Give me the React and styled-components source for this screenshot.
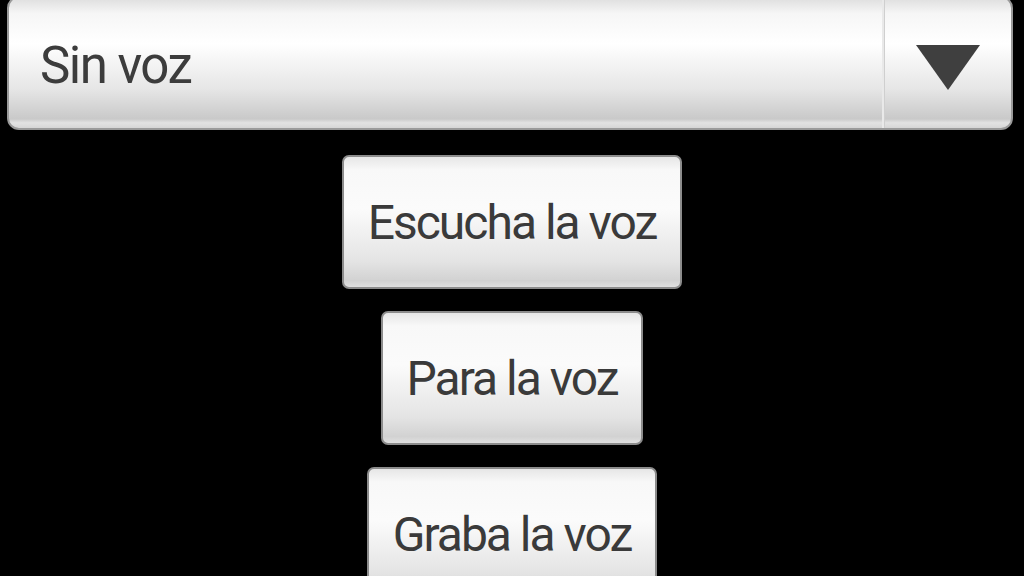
import React from "react";
import styled, { createGlobalStyle } from "styled-components";

const GlobalStyle = createGlobalStyle`
  html, body {
    margin: 0;
    padding: 0;
    background: #000;
    overflow: hidden;
  }
  body {
    font-family: Roboto, "Open Sans", "Liberation Sans", sans-serif;
  }
`;

const Screen = styled.div`
  width: 1024px;
  height: 576px;
  background: #000;
  display: flex;
  flex-direction: column;
  align-items: center;
  gap: 22px;
  overflow: hidden;
`;

const Spinner = styled.div`
  box-sizing: border-box;
  align-self: stretch;
  flex-shrink: 0;
  margin: -4px 11px 3px 7px;
  height: 134px;
  display: flex;
  border: 2px solid #9a9a9a;
  border-radius: 12px;
  background: linear-gradient(
    #dedede 0%,
    #f6f6f6 12%,
    #ffffff 35%,
    #e6e6e6 70%,
    #c9c9c9 93%,
    #e2e2e2 96%,
    #d6d6d6 100%
  );
  overflow: hidden;
`;

const SpinnerLabel = styled.div`
  flex: 1;
  display: flex;
  align-items: center;
  padding-left: 31px;
  padding-top: 4px;
  font-size: 51px;
  letter-spacing: -1.5px;
  color: #3c3c3c;
`;

const ArrowCell = styled.div`
  width: 127px;
  display: flex;
  align-items: center;
  justify-content: center;
  border-left: 2px solid #e9e9e9;
  box-shadow: inset 1px 0 0 #cfcfcf;
  padding-top: 8px;
`;

const Arrow = styled.div`
  width: 0;
  height: 0;
  border-left: 32px solid transparent;
  border-right: 32px solid transparent;
  border-top: 45px solid #3f3f3f;
`;

const Button = styled.button`
  box-sizing: border-box;
  height: 134px;
  padding: 0 24px 0;
  display: flex;
  align-items: center;
  justify-content: center;
  border: 2px solid #8c8c8c;
  border-radius: 7px;
  background: linear-gradient(
    #e6e6e6 0%,
    #f8f8f8 10%,
    #fbfbfb 40%,
    #e4e4e4 80%,
    #d2d2d2 95%,
    #e0e0e0 100%
  );
  font-family: Roboto, "Open Sans", "Liberation Sans", sans-serif;
  font-size: 48px;
  letter-spacing: -2px;
  color: #3a3a3a;
  cursor: pointer;
  flex-shrink: 0;
`;

export default function App() {
  return (
    <>
      <GlobalStyle />
      <Screen>
        <Spinner>
          <SpinnerLabel>Sin voz</SpinnerLabel>
          <ArrowCell>
            <Arrow />
          </ArrowCell>
        </Spinner>
        <Button type="button">Escucha la voz</Button>
        <Button type="button">Para la voz</Button>
        <Button type="button">Graba la voz</Button>
      </Screen>
    </>
  );
}
